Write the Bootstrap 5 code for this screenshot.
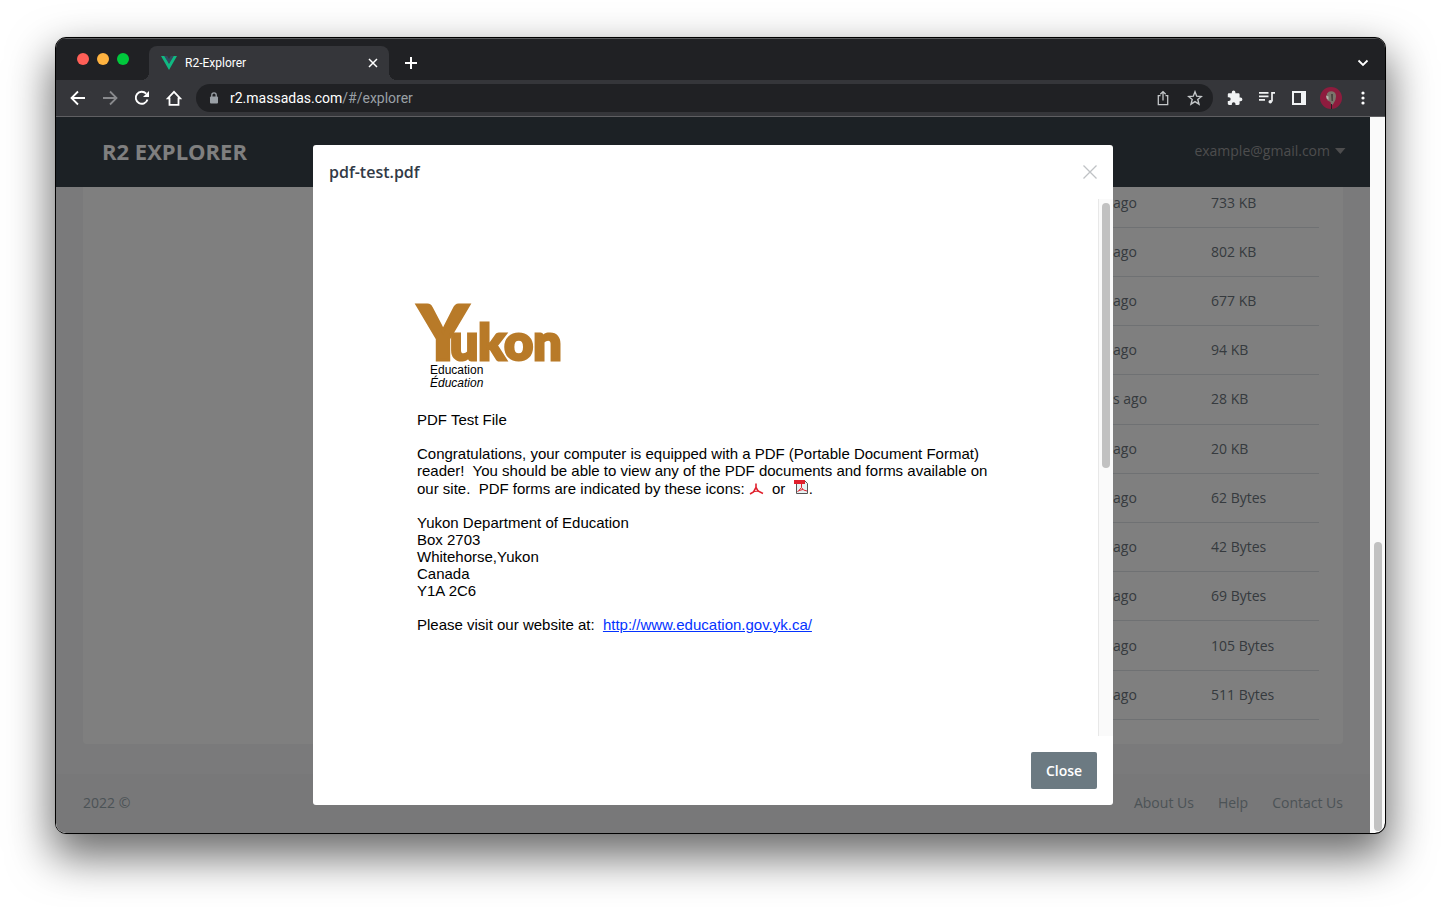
<!DOCTYPE html>
<html lang="en">
<head>
<meta charset="utf-8">
<meta name="viewport" content="width=device-width, initial-scale=1">
<title>R2-Explorer</title>
<link href="https://cdn.jsdelivr.net/npm/bootstrap@5.3.0/dist/css/bootstrap.min.css" rel="stylesheet">
<style>
body{background:#fff;font-family:"Open Sans","Noto Sans",sans-serif;font-size:14px;line-height:20px;color:#6c757d}
button{background:none;border:0;padding:0;color:inherit}
svg{display:block;flex:none}
.desk{padding:38px 56px 74px}
.browser{background:#202124;border-radius:10px;overflow:hidden;outline:1px solid #000;box-shadow:0 0 2px rgba(0,0,0,.5),0 20px 44px 4px rgba(0,0,0,.58)}
.chrome-ui{font-family:Roboto,sans-serif;color:#fff}
.strip{height:42px;border-top:1px solid #5a5b5d;padding:0 16px 0 21px}
.dots{gap:8px;padding-bottom:2px}
.dots i{width:12px;height:12px;border-radius:50%}
.tab{width:240px;height:34px;margin-left:20px;background:#35363a;border-radius:8px 8px 0 0;padding:0 11px 0 12px;font-size:12px;position:relative}
.tab::before,.tab::after{content:"";position:absolute;bottom:0;width:8px;height:8px}
.tab::before{right:100%;background:radial-gradient(circle at 0 0,transparent 8px,#35363a 8px)}
.tab::after{left:100%;background:radial-gradient(circle at 100% 0,transparent 8px,#35363a 8px)}
.strip-btn{padding-top:6px}
.toolbar{height:37px;background:#35363a;border-bottom:1px solid #5f5f62;padding:0 14px;gap:16px}
.omni{height:28px;border-radius:14px;background:#202124;padding:0 10px 0 12px;margin:0 -2px}
.url{font-size:14px;padding-left:10px}
.url span{color:#9aa0a6}
.avatar{margin:0 -3px}
.bar-y{width:15px;background:#fafafa;padding:4px 3px 2px 4px}
.thumb{width:8px;border-radius:4px;background:#c1c1c1}
.site{background:#f4f5f6}
.topnav{height:70px;background:#38424a;padding:0 24px 2px 46px;z-index:2}
.brand{font-size:22px;font-weight:700;color:#fff;text-decoration:none}
.user{color:#9a9a9c}
.filecard{background:#fff;margin:0 27px 29px;padding:0 24px 24px;border-radius:0 0 4px 4px}
.files{width:100%;height:541px;margin-top:-8px;color:#6c757d}
.files td{padding:0;vertical-align:middle}
.files td+td{border-bottom:1px solid #dee2e6}
.when{width:98px}.size{width:108px}
.foot{height:59px;background:#f0f0f2;padding:0 27px 2px;color:#98a6ad}
.foot a{color:inherit;text-decoration:none}
.shade{position:absolute;inset:0;background:rgba(0,0,0,.5);padding:28px 16px;z-index:5}
.dialog{width:800px;max-width:100%;background:#fff;border-radius:3px}
.dialog header{height:54px;padding:0 16px}
.dialog h1{font:600 16px/24px "Open Sans",sans-serif;color:#323a46;margin:0}
.dialog footer{padding:16px}
.btn-shut{height:37px;width:66px;background:#6c7a82;color:#fff;font-weight:600;border-radius:2px;font-size:14px}
.paper{padding:102px 104px 0;font:15px/17px "Liberation Sans",Arial,sans-serif;color:#000}
.paper p{margin:0 0 17px}
.paper a{color:#0433ff}
.paper svg{overflow:visible}
.paper svg.ic{display:inline-block;vertical-align:-1px}
.inner-bar{width:15px;background:#fafafa;border-left:1px solid #e8e8e8;padding:4px 3px}
</style>
</head>
<body>
<div class="desk d-flex min-vh-100">
<div class="browser d-flex flex-column flex-grow-1">
  <div class="chrome-ui">
    <div class="strip d-flex align-items-end">
      <div class="dots d-flex align-self-center"><i style="background:#ff5f57"></i><i style="background:#ffb340"></i><i style="background:#00c83c"></i></div>
      <div class="tab d-flex align-items-center">
        <svg width="16" height="14" viewBox="0 0 16 14"><path fill="#10b981" d="M0 0h4l4 7 4-7h4L8 14z"/><path fill="#35495e" d="M3.200 0h3l1.800 3 1.800-3h3L8 8z"/></svg>
        <span class="ms-2 flex-grow-1">R2-Explorer</span>
        <button aria-label="Close tab"><svg width="10" height="10" viewBox="0 0 10 10" stroke="#fff" stroke-width="1.500"><path d="M1 1l8 8M9 1l-8 8"/></svg></button>
      </div>
      <button class="strip-btn align-self-center ms-3" aria-label="New tab"><svg width="12" height="12" viewBox="0 0 12 12" stroke="#fff" stroke-width="2"><path d="M6 0v12M0 6h12"/></svg></button>
      <button class="strip-btn align-self-center ms-auto" aria-label="Search tabs"><svg width="12" height="8" viewBox="0 0 12 8" fill="none" stroke="#fff" stroke-width="1.800"><path d="M1.500 1.500L6 6l4.500-4.500"/></svg></button>
    </div>
    <div class="toolbar d-flex align-items-center">
      <button aria-label="Back"><svg width="16" height="16" viewBox="0 0 16 16" fill="none" stroke="#fff" stroke-width="1.800"><path d="M15 8H2M8 1.500L1.500 8 8 14.500"/></svg></button>
      <button aria-label="Forward"><svg width="16" height="16" viewBox="0 0 16 16" fill="none" stroke="#88898c" stroke-width="1.800"><path d="M1 8h13M8 1.500L14.500 8 8 14.500"/></svg></button>
      <button aria-label="Reload"><svg width="16" height="16" viewBox="0 0 16 16"><path d="M13.500 9.500A6 6 0 1 1 12.200 3.700" fill="none" stroke="#fff" stroke-width="1.900"/><path fill="#fff" d="M15 1v6H9z"/></svg></button>
      <button aria-label="Home"><svg width="16" height="16" viewBox="0 0 16 16" fill="none" stroke="#fff" stroke-width="1.800"><path d="M3.500 14.800V8.400H1.700L8 1.800l6.300 6.600h-1.800v6.400z"/></svg></button>
      <div class="omni d-flex align-items-center flex-grow-1">
        <svg width="12" height="12" viewBox="0 0 12 12"><rect x="2" y="4.500" width="8" height="7" rx="1" fill="#9aa0a6"/><path d="M3.800 5V3a2.200 2.200 0 0 1 4.400 0v2" fill="none" stroke="#9aa0a6" stroke-width="1.300"/></svg>
        <div class="url flex-grow-1">r2.massadas.com<span>/#/explorer</span></div>
        <button class="me-3" aria-label="Share"><svg width="16" height="16" viewBox="0 0 16 16" fill="none" stroke="#c4c7c9" stroke-width="1.300"><path d="M5.500 5.600H3.300v9h9.400v-9h-2.200M8 10.500V1.800M5.300 4.300L8 1.600l2.700 2.700"/></svg></button>
        <button aria-label="Bookmark"><svg width="16" height="16" viewBox="0 0 16 16" fill="none" stroke="#c4c7c9" stroke-width="1.400"><path d="M8 1.800l1.700 4.400 4.700.3-3.600 3 1.200 4.600L8 11.600l-4 2.500 1.200-4.600-3.600-3 4.700-.3z"/></svg></button>
      </div>
      <button aria-label="Extensions"><svg width="16" height="16" viewBox="0 0 16 16" fill="#f1f3f4"><path d="M13.600 7.600h-1V4.500c0-.8-.6-1.300-1.300-1.300H8.400v-.9a1.800 1.800 0 0 0-3.600 0v.9H2.100C1.400 3.200.8 3.700.8 4.500v2.700h1a1.900 1.900 0 0 1 0 3.800h-1v2.800c0 .7.600 1.200 1.300 1.200h2.700v-1a1.800 1.800 0 0 1 3.700 0v1h2.800c.7 0 1.300-.5 1.300-1.200v-2.600h1a1.800 1.800 0 0 0 0-3.600z"/></svg></button>
      <button aria-label="Media"><svg width="16" height="16" viewBox="0 0 16 16" fill="none" stroke="#f1f3f4" stroke-width="1.700"><path d="M0 2.800h9.500M0 6.300h9.500M0 9.800h6M16 2.800h-3v8.700"/><circle cx="11.300" cy="11.800" r="1.800" fill="#f1f3f4" stroke="none"/></svg></button>
      <button aria-label="Side panel"><svg width="16" height="16" viewBox="0 0 16 16"><path fill="#f1f3f4" fill-rule="evenodd" d="M1 1h14v14H1zM3 3v10h7V3z"/></svg></button>
      <button class="avatar" aria-label="Profile"><svg width="22" height="22" viewBox="0 0 22 22"><circle cx="11" cy="11" r="11" fill="#8e1c3e"/><path fill="#7b756b" d="M7 6.500Q9 3.500 13 4.500q3 1 3 5t-2.500 7L11.500 19l-1-4-3-1.500-.8-4z"/><path fill="#b9b5ad" d="M6 8.500l2.500 1v3.500l-2-1.500z"/><path fill="#4b4641" d="M11 7h2v7h-1.500z"/><path stroke="#222" d="M11.500 17v5"/></svg></button>
      <button aria-label="Menu"><svg width="16" height="16" viewBox="0 0 16 16" fill="#fff"><circle cx="8" cy="3" r="1.600"/><circle cx="8" cy="8" r="1.600"/><circle cx="8" cy="13" r="1.600"/></svg></button>
    </div>
  </div>

  <div class="d-flex flex-grow-1">
    <div class="site position-relative flex-grow-1 d-flex flex-column">
      <nav class="topnav position-relative d-flex align-items-center justify-content-between">
        <a class="brand" href="#">R2 EXPLORER</a>
        <button class="user d-flex align-items-center gap-1">example@gmail.com <svg width="12" height="8" viewBox="0 0 12 8" fill="currentColor"><path d="M1 1h10.500L6.300 7z"/></svg></button>
      </nav>
      <div class="filecard">
        <table class="files">
          <tbody>
          <tr><td></td><td class="when">ago</td><td class="size">733 KB</td></tr>
          <tr><td></td><td>ago</td><td>802 KB</td></tr>
          <tr><td></td><td>ago</td><td>677 KB</td></tr>
          <tr><td></td><td>ago</td><td>94 KB</td></tr>
          <tr><td></td><td>s ago</td><td>28 KB</td></tr>
          <tr><td></td><td>ago</td><td>20 KB</td></tr>
          <tr><td></td><td>ago</td><td>62 Bytes</td></tr>
          <tr><td></td><td>ago</td><td>42 Bytes</td></tr>
          <tr><td></td><td>ago</td><td>69 Bytes</td></tr>
          <tr><td></td><td>ago</td><td>105 Bytes</td></tr>
          <tr><td></td><td>ago</td><td>511 Bytes</td></tr>
          </tbody>
        </table>
      </div>
      <div class="foot d-flex align-items-center justify-content-between mt-auto">
        <span>2022 ©</span>
        <div class="d-flex gap-4"><a href="#">About Us</a><a href="#">Help</a><a href="#">Contact Us</a></div>
      </div>

      <div class="shade d-flex justify-content-center">
        <section class="dialog d-flex flex-column" role="dialog" aria-labelledby="dlg-title">
          <header class="d-flex align-items-center justify-content-between">
            <h1 id="dlg-title">pdf-test.pdf</h1>
            <button aria-label="Dismiss"><svg width="14" height="14" viewBox="0 0 14 14" stroke="#bfc2c5" stroke-width="1.300"><path d="M.5.5l13 13M13.500.5l-13 13"/></svg></button>
          </header>
          <div class="d-flex flex-grow-1">
            <article class="paper flex-grow-1">
              <svg width="152" height="94" viewBox="0 0 152 94" role="img" aria-label="Yukon Education">
                <text x="1" y="59" fill="#b87a28" stroke="#b87a28" stroke-width="3" font-family="Lato, sans-serif" font-weight="900" font-size="76">Y<tspan x="33" font-size="50">ukon</tspan></text>
                <text x="13" y="73" font-family="Liberation Sans" font-size="12">Education</text>
                <text x="13" y="86" font-family="Liberation Sans" font-size="12" font-style="italic">Éducation</text>
              </svg>
              <p class="pt-3">PDF Test File</p>
              <p>Congratulations, your computer is equipped with a PDF (Portable Document Format)<br>reader!&nbsp; You should be able to view any of the PDF documents and forms available on<br>our site.&nbsp; PDF forms are indicated by these icons:<svg class="ic ms-1" width="15" height="12" viewBox="0 0 15 12" fill="none" stroke="#e0202c"><path stroke-width="1.600" d="M7 .5v4L4.500 9 1 11M7 4.500L9 8l5 2.500"/><path d="M4 8.700l6-.7"/></svg>&nbsp; or&nbsp; <svg class="ic" width="15" height="16" viewBox="0 0 15 16"><path fill="#e6f2f2" stroke="#555" d="M2.500 1.500h8l3 3v10h-11z"/><path fill="#e0202c" d="M0 1h11v4H0z"/><path d="M3.500 13l4-4.500V5M7.500 8.500l2 2.500 3.500 1M5 11.500l4-1" fill="none" stroke="#e0202c"/></svg>.</p>
              <p>Yukon Department of Education<br>Box 2703<br>Whitehorse,Yukon<br>Canada<br>Y1A 2C6</p>
              <p>Please visit our website at:&nbsp; <a href="#">http://www.education.gov.yk.ca/</a></p>
            </article>
            <div class="inner-bar"><div class="thumb h-50"></div></div>
          </div>
          <footer class="d-flex justify-content-end"><button class="btn-shut">Close</button></footer>
        </section>
      </div>
    </div>
    <div class="bar-y d-flex align-items-end"><div class="thumb" style="height:40.700%"></div></div>
  </div>
</div>
</div>
<script src="https://cdn.jsdelivr.net/npm/bootstrap@5.3.0/dist/js/bootstrap.bundle.min.js"></script>
</body>
</html>
